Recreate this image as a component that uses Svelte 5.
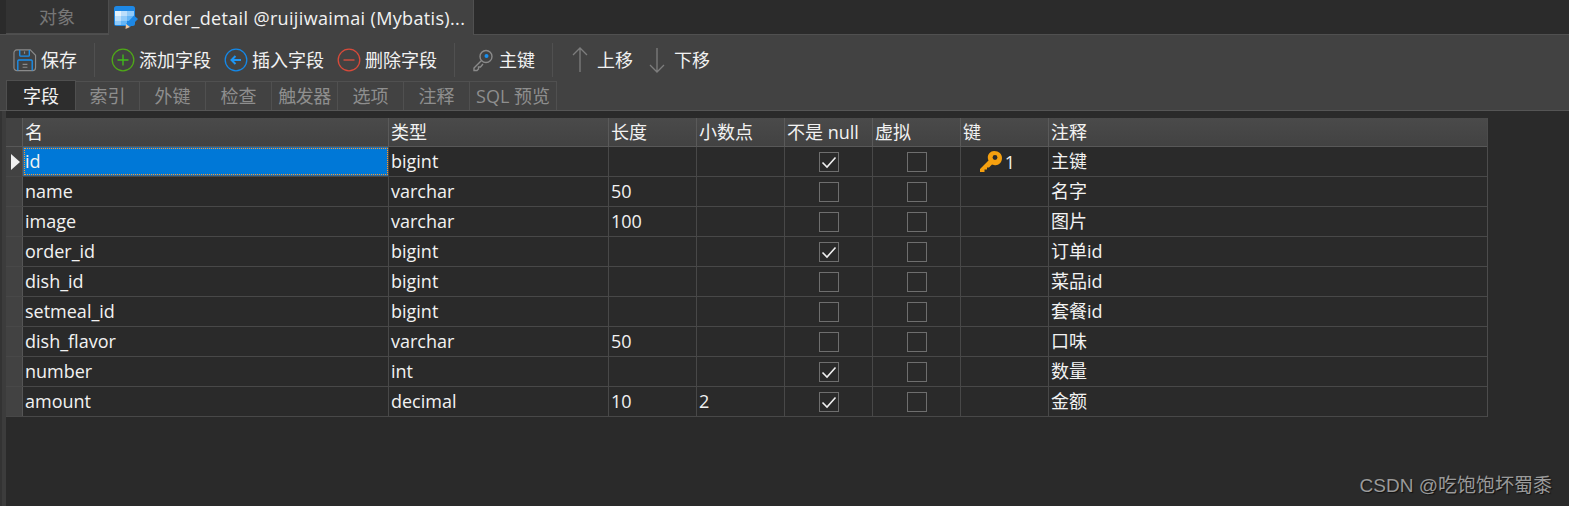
<script>
  const columns = [
    { label: '名', width: 366 },
    { label: '类型', width: 220 },
    { label: '长度', width: 88 },
    { label: '小数点', width: 88 },
    { label: '不是 null', width: 88 },
    { label: '虚拟', width: 88 },
    { label: '键', width: 88 },
    { label: '注释', width: 438 }
  ];
  const rows = [
    ['id', 'bigint', '', '', true, '主键'],
    ['name', 'varchar', '50', '', false, '名字'],
    ['image', 'varchar', '100', '', false, '图片'],
    ['order_id', 'bigint', '', '', true, '订单id'],
    ['dish_id', 'bigint', '', '', false, '菜品id'],
    ['setmeal_id', 'bigint', '', '', false, '套餐id'],
    ['dish_flavor', 'varchar', '50', '', false, '口味'],
    ['number', 'int', '', '', true, '数量'],
    ['amount', 'decimal', '10', '2', true, '金额']
  ];
  const subtabs = ['字段', '索引', '外键', '检查', '触发器', '选项', '注释', 'SQL 预览'];
  const template = '17px ' + columns.map((c) => c.width + 'px').join(' ');
</script>

<div class="page">
  <div class="tabbar">
    <div class="tab objects">对象</div>
    <div class="tab active">
      <svg width="24" height="24" viewBox="0 0 24 24">
        <rect x="0" y="0" width="21" height="20" rx="2.5" fill="#1e88e5" />
        <rect x="1" y="5" width="6" height="5" fill="#e3f2fd" />
        <rect x="7" y="5" width="6" height="5" fill="#bbdefb" />
        <rect x="13" y="5" width="7" height="5" fill="#90caf9" />
        <rect x="1" y="10" width="6" height="5" fill="#bbdefb" />
        <rect x="7" y="10" width="6" height="5" fill="#90caf9" />
        <rect x="13" y="10" width="7" height="5" fill="#64b5f6" />
        <rect x="1" y="15" width="6" height="4" fill="#90caf9" />
        <rect x="7" y="15" width="6" height="4" fill="#64b5f6" />
        <path d="M20 9.500 L24 13 L16 21 L12 18 Z" fill="#1e88e5" />
        <path d="M12 18 L16 21 L11.500 23 Z" fill="#f0c8a0" />
      </svg>
      <span class="title">order_detail @ruijiwaimai (Mybatis)...</span>
    </div>
  </div>

  <div class="toolbar">
    <div class="tool save">
      <svg width="24" height="25" viewBox="0 0 25 25" fill="none">
        <path d="M4 1.500 H18 L23.500 7 V20 a3 3 0 0 1 -3 3 H4 a3 3 0 0 1 -3 -3 V4.500 a3 3 0 0 1 3 -3 Z" stroke="#8a8a8a" stroke-width="1.200" />
        <path d="M7 1.500 V7 a1 1 0 0 0 1 1 H16 a1 1 0 0 0 1 -1 V1.500" stroke="#1890f0" stroke-width="1.400" />
        <path d="M12 3 V5.500" stroke="#8a8a8a" stroke-width="1.200" />
        <path d="M5 23 V13 a1 1 0 0 1 1 -1 H19 a1 1 0 0 1 1 1 V23" stroke="#1890f0" stroke-width="1.400" />
        <path d="M10 16.500 H15 M10 19.500 H15" stroke="#8a8a8a" stroke-width="1.200" />
      </svg>
      <span>保存</span>
    </div>
    <div class="sep first"></div>
    <div class="tool">
      <svg width="24" height="24" viewBox="0 0 24 24" fill="none">
        <circle cx="12" cy="12" r="10.800" stroke="#4fa818" stroke-width="1.300" />
        <path d="M12 6.500 V17.500 M6.500 12 H17.500" stroke="#3fc01a" stroke-width="1.300" />
      </svg>
      <span>添加字段</span>
    </div>
    <div class="tool">
      <svg width="24" height="24" viewBox="0 0 24 24" fill="none">
        <circle cx="12" cy="12" r="10.800" stroke="#1488e8" stroke-width="1.300" />
        <path d="M17 12 H8 M11.500 8 L7.500 12 L11.500 16" stroke="#1e96f5" stroke-width="2" />
      </svg>
      <span>插入字段</span>
    </div>
    <div class="tool last">
      <svg width="24" height="24" viewBox="0 0 24 24" fill="none">
        <circle cx="12" cy="12" r="10.800" stroke="#d84a3a" stroke-width="1.300" />
        <path d="M6.500 12 H17.500" stroke="#e0503f" stroke-width="1.300" />
      </svg>
      <span>删除字段</span>
    </div>
    <div class="sep second"></div>
    <div class="tool last key">
      <svg width="22" height="24" viewBox="0 0 22 24" fill="none">
        <circle cx="14" cy="8.500" r="6" stroke="#8a8a8a" stroke-width="1.400" />
        <circle cx="14.500" cy="8" r="2" fill="#1890f0" />
        <path d="M9.500 12.500 L2 20 V22.500 H5 L6.500 21 V19 H8.500 L11 16" stroke="#8a8a8a" stroke-width="1.400" />
      </svg>
      <span>主键</span>
    </div>
    <div class="sep third"></div>
    <div class="tool move">
      <svg width="16" height="26" viewBox="0 0 16 26" fill="none">
        <path d="M8 1 V25 M1 8 L8 1 L15 8" stroke="#7d7d7d" stroke-width="1.300" />
      </svg>
      <span>上移</span>
    </div>
    <div class="tool move">
      <svg width="16" height="26" viewBox="0 0 16 26" fill="none">
        <path d="M8 1 V25 M1 18 L8 25 L15 18" stroke="#7d7d7d" stroke-width="1.300" />
      </svg>
      <span>下移</span>
    </div>
  </div>

  <div class="subtabs">
    {#each subtabs as tab, i}
      <div class="subtab" class:selected={i === 0} class:short={i === 1} class:sql={i === 7} class:narrow={i === 4}>{tab}</div>
    {/each}
  </div>

  <div class="content">
    <div class="grid">
      <div class="row header" style="grid-template-columns: {template}">
        <div class="cell marker"></div>
        {#each columns as c}
          <div class="cell">{c.label}</div>
        {/each}
      </div>
      {#each rows as r, i}
        <div class="row" style="grid-template-columns: {template}">
          <div class="cell marker">
            {#if i === 0}<span class="arrow"></span>{/if}
          </div>
          <div class="cell" class:focused={i === 0}>{r[0]}</div>
          <div class="cell">{r[1]}</div>
          <div class="cell">{r[2]}</div>
          <div class="cell">{r[3]}</div>
          <div class="cell center">
            <span class="box">
              {#if r[4]}
                <svg width="18" height="18" viewBox="0 0 18 18" fill="none">
                  <path d="M2.500 9.500 L7 14 L15.500 4.500" stroke="#f0f0f0" stroke-width="1.600" />
                </svg>
              {/if}
            </span>
          </div>
          <div class="cell center"><span class="box"></span></div>
          <div class="cell keycell">
            {#if i === 0}
              <svg width="24" height="22" viewBox="0 0 24 22">
                <path d="M15 0 C20 0 23 3 23 7 C23 12 19 15 15 14 C14 14 13.500 13.800 13 13.500 L10 16.500 H8 V18.500 H5.500 V21 H1 V18 L9.500 9.500 C9 8.500 8.800 7.500 8.800 6.500 C8.800 3 11.500 0 15 0 Z" fill="#f5a00f" />
                <circle cx="16" cy="6.500" r="2.400" fill="#2a2a2a" />
              </svg>
              <span>1</span>
            {/if}
          </div>
          <div class="cell">{r[5]}</div>
        </div>
      {/each}
    </div>
    <div class="watermark">CSDN @吃饱饱坏蜀黍</div>
  </div>
</div>

<style>
  :global(body) {
    margin: 0;
    background: #2a2a2a;
  }
  .page {
    width: 1569px;
    height: 506px;
    overflow: hidden;
    background: #2a2a2a;
    color: #f2f2f2;
    font-family: "Open Sans", "Noto Sans CJK SC", sans-serif;
    font-size: 18px;
    line-height: 24px;
    display: flex;
    flex-direction: column;
  }
  .tabbar {
    height: 34px;
    padding-left: 6px;
    display: flex;
    background: #2b2b2b;
    border-bottom: 1px solid #505050;
    flex: none;
  }
  .tab {
    display: flex;
    align-items: center;
    height: 34px;
    box-sizing: border-box;
  }
  .objects {
    width: 103px;
    justify-content: center;
    background: #333;
    color: #777;
    border-right: 1px solid #4d4d4d;
    border-bottom: 1px solid #4d4d4d;
  }
  .active {
    width: 365px;
    height: 35px;
    padding-left: 5px;
    gap: 5px;
    background: #424242;
    border-right: 1px solid #505050;
  }
  .title {
    letter-spacing: 0.35px;
  }
  .toolbar {
    height: 45px;
    box-sizing: border-box;
    padding: 5px 0 0 13px;
    flex: none;
    display: flex;
    align-items: center;
    background: #424242;
  }
  .tool {
    display: flex;
    align-items: center;
    gap: 4px;
    white-space: nowrap;
    margin-right: 13px;
  }
  .tool.last,
  .save {
    margin-right: 0;
  }
  .key {
    gap: 5px;
  }
  .sep {
    width: 1px;
    height: 34px;
    background: #505050;
    flex: none;
  }
  .sep.first {
    margin: 0 16px 0 17px;
  }
  .sep.second {
    margin: 0 17px 0 17px;
  }
  .sep.third {
    margin: 0 19px 0 17px;
  }
  .move {
    gap: 9px;
    margin-right: 16px;
  }
  .subtabs {
    height: 31px;
    flex: none;
    display: flex;
    padding-left: 6px;
    background: #424242;
    border-bottom: 1px solid #555;
    box-sizing: border-box;
  }
  .subtab {
    width: 66px;
    box-sizing: border-box;
    height: 29px;
    margin-top: 1px;
    display: flex;
    align-items: center;
    justify-content: center;
    color: #8e8e8e;
    border-right: 1px solid #505050;
    border-top: 1px solid #505050;
  }
  .subtab.selected {
    width: 70px;
    height: 30px;
    margin-top: 0;
    color: #f2f2f2;
    background: #2d2d2d;
    border: 1px solid #4f4f4f;
    border-bottom: none;
  }
  .subtab.short {
    width: 64px;
  }
  .subtab.sql {
    width: 87px;
  }
  .subtab.narrow {
    letter-spacing: -0.5px;
  }
  .content {
    flex: 1;
    padding: 7px 0 0 6px;
    position: relative;
    background: linear-gradient(90deg, #333 2px, #3c3c3c 2px, #3c3c3c 6px, #2a2a2a 6px);
  }
  .grid {
    width: 1482px;
    box-sizing: border-box;
    border-right: 1px solid #4c4c4c;
  }
  .row {
    display: grid;
    height: 30px;
    border-bottom: 1px solid #484848;
    box-sizing: border-box;
  }
  .header {
    height: 29px;
    background: linear-gradient(#4a4a4a, #424242);
    border-bottom: 1px solid #585858;
  }
  .cell {
    display: flex;
    align-items: center;
    padding: 0 0 1px 2px;
    border-right: 1px solid #484848;
    box-sizing: border-box;
    white-space: nowrap;
    min-width: 0;
  }
  .header .cell {
    border-right-color: #5a5a5a;
  }
  .cell:last-child {
    border-right: none;
  }
  .marker {
    background: #424242;
    padding: 0;
    border-right: 1px solid #555;
  }
  .arrow {
    width: 0;
    height: 0;
    margin-left: 5px;
    border-left: 9px solid #f0f0f0;
    border-top: 8px solid transparent;
    border-bottom: 8px solid transparent;
  }
  .focused {
    background: #0078d7;
    outline: 1px dotted #ff9a2a;
    outline-offset: -2px;
    box-shadow: inset 0 0 0 1px #2c6aa0;
  }
  .center {
    justify-content: center;
    padding: 0;
  }
  .box {
    width: 20px;
    height: 20px;
    box-sizing: border-box;
    border: 1px solid #6e6e6e;
    display: flex;
    align-items: center;
    justify-content: center;
  }
  .keycell {
    justify-content: center;
    gap: 2px;
    padding: 0 15px 0 0;
  }
  .watermark {
    position: absolute;
    right: 17px;
    bottom: 8px;
    color: #9a9a9a;
    font-family: "Liberation Sans", "Noto Sans CJK SC", sans-serif;
    font-size: 19px;
    text-shadow: 1px 1px 1px #111;
  }
</style>
